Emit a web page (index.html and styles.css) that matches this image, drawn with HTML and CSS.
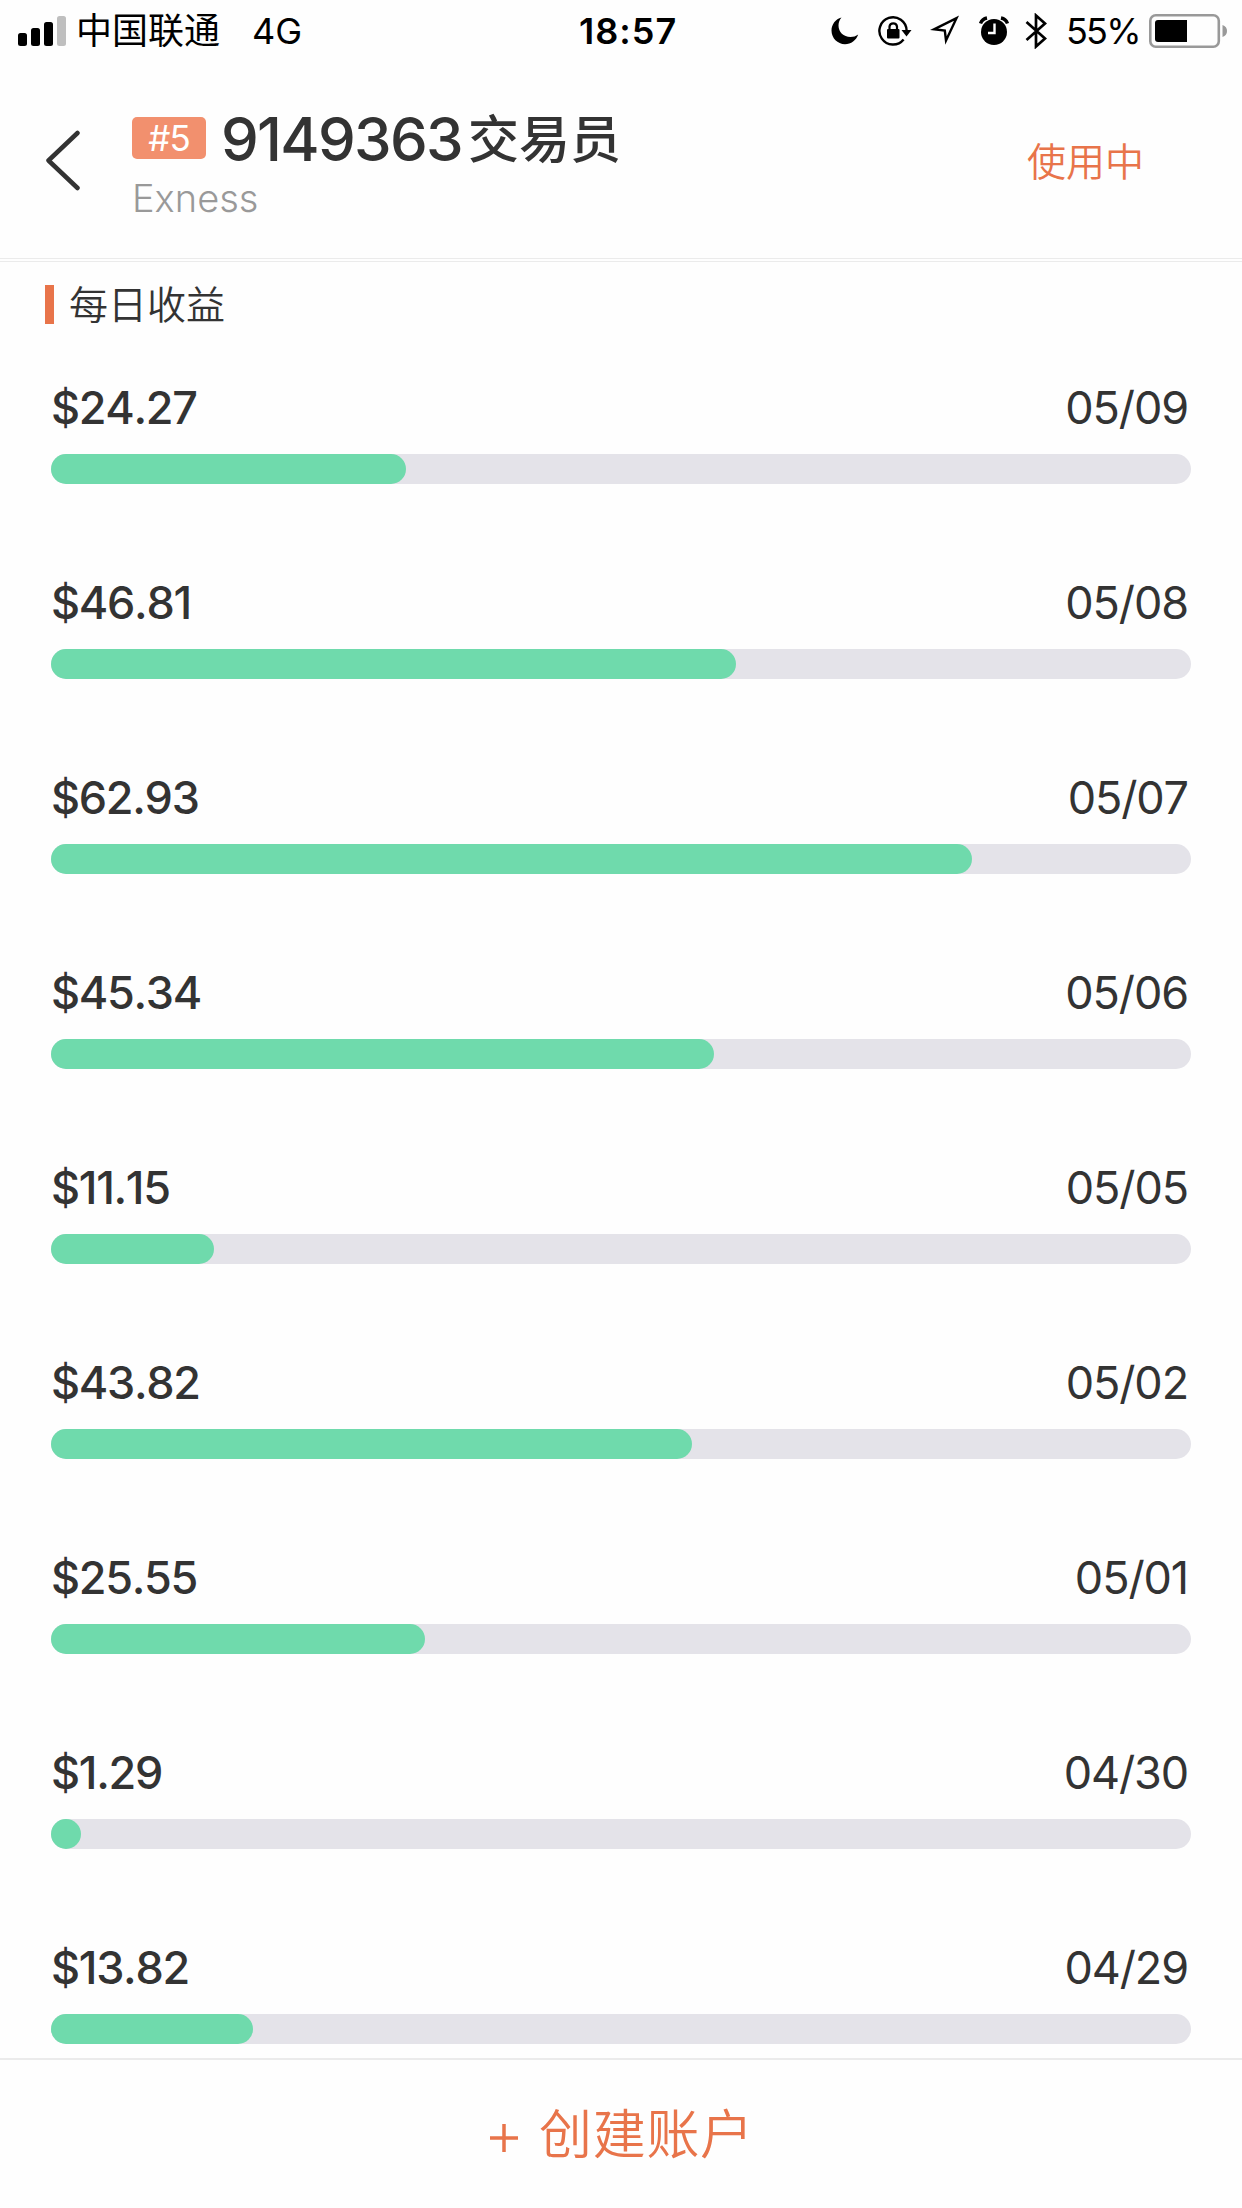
FILE: index.html
```
<!DOCTYPE html>
<html lang="zh-CN">

<head>
    <meta charset="UTF-8">
    <meta name="viewport" content="width=device-width, initial-scale=1.0">
    <title>9149363交易员</title>
    <link rel="stylesheet" href="styles.css">
</head>

<body>
    <div class="status-bar">
        <div class="status-left">
            <svg class="signal" width="48" height="30" viewBox="0 0 48 30">
                <rect x="0" y="17" width="9" height="13" rx="2.5" />
                <rect x="13" y="12" width="9" height="18" rx="2.5" />
                <rect x="26" y="6" width="9" height="24" rx="2.5" />
                <rect x="39" y="0" width="9" height="30" rx="2.5" fill="#bfbfbf" />
            </svg>
            <span class="carrier">中国联通</span>
            <span class="network">4G</span>
        </div>
        <span class="clock">18:57</span>
        <div class="status-right">
            <svg class="moon" width="28" height="28" viewBox="0 0 28 28">
                <path d="M10.5 0.5C4.500 2 0.500 7.500 0.500 13.500C0.500 21 6.500 27.200 14 27.200C20 27.200 25.300 23.200 27.200 17.500C25 19.200 22.300 20 19.500 20C12.500 20 7.500 15 7.500 8.500C7.500 5.500 8.500 2.700 10.500 0.500Z" />
            </svg>
            <svg class="lock" width="34" height="32" viewBox="0 0 34 32">
                <path d="M25.600 24.400A13.600 13.600 0 1 1 28.600 15.500" fill="none" stroke="#000" stroke-width="2.4" />
                <path d="M23.500 15H33.500L28.500 21.500Z" />
                <rect x="9" y="14" width="12.500" height="9.500" rx="1" />
                <path d="M11.500 15V11.500A3.800 3.800 0 0 1 19 11.500V15" fill="none" stroke="#000" stroke-width="2.200" />
            </svg>
            <svg class="location" width="30" height="32" viewBox="0 0 30 32">
                <path d="M4 14.300L26.500 3.200L16 25.500L14.800 15.600Z" fill="none" stroke="#000" stroke-width="2.400" />
            </svg>
            <svg class="alarm" width="30" height="30" viewBox="0 0 30 30">
                <circle cx="15" cy="16" r="13" />
                <path d="M1.500 7.500Q3 3 8 2M28.500 7.500Q27 3 22 2" fill="none" stroke="#000" stroke-width="3.400" />
                <path d="M15.500 7.500V17H9" fill="none" stroke="#fefefe" stroke-width="2.400" />
            </svg>
            <svg class="bluetooth" width="22" height="36" viewBox="0 0 22 36">
                <path d="M1.500 9L20 25.500L11 33.500V2.500L20 10.500L1.500 27" fill="none" stroke="#000" stroke-width="2.700" />
            </svg>
            <span class="percent">55%</span>
            <svg class="battery" width="79" height="34" viewBox="0 0 79 34">
                <rect x="1.300" y="1.300" width="68.500" height="31.400" rx="5.500" fill="none" stroke="#999" stroke-width="2.600" />
                <path d="M38 6H9Q6 6 6 9V25Q6 28 9 28H38Z" />
                <path d="M73.500 11Q78 12.500 78 17T73.500 23Z" fill="#999" />
            </svg>
        </div>
    </div>

    <header class="header">
        <svg class="back" width="36" height="61" viewBox="0 0 36 61">
            <path d="M32.500 3L3.500 30.500L32.500 58" />
        </svg>
        <div class="account">
            <div class="account-title">
                <span class="badge">#5</span>
                <h1><span class="account-number">9149363</span><span class="account-role">交易员</span></h1>
            </div>
            <p class="broker">Exness</p>
        </div>
        <span class="state">使用中</span>
    </header>

    <main class="content">
        <h2 class="section-title">每日收益</h2>

        <ul class="profit-list">
            <li class="profit-item">
                <div class="profit-info"><span class="amount">$24.27</span><span class="date">05/09</span></div>
                <div class="bar"><div class="bar-fill" style="width: 31.14%"></div></div>
            </li>
            <li class="profit-item">
                <div class="profit-info"><span class="amount">$46.81</span><span class="date">05/08</span></div>
                <div class="bar"><div class="bar-fill" style="width: 60.07%"></div></div>
            </li>
            <li class="profit-item">
                <div class="profit-info"><span class="amount">$62.93</span><span class="date">05/07</span></div>
                <div class="bar"><div class="bar-fill" style="width: 80.76%"></div></div>
            </li>
            <li class="profit-item">
                <div class="profit-info"><span class="amount">$45.34</span><span class="date">05/06</span></div>
                <div class="bar"><div class="bar-fill" style="width: 58.18%"></div></div>
            </li>
            <li class="profit-item">
                <div class="profit-info"><span class="amount">$11.15</span><span class="date">05/05</span></div>
                <div class="bar"><div class="bar-fill" style="width: 14.31%"></div></div>
            </li>
            <li class="profit-item">
                <div class="profit-info"><span class="amount">$43.82</span><span class="date">05/02</span></div>
                <div class="bar"><div class="bar-fill" style="width: 56.23%"></div></div>
            </li>
            <li class="profit-item">
                <div class="profit-info"><span class="amount">$25.55</span><span class="date">05/01</span></div>
                <div class="bar"><div class="bar-fill" style="width: 32.79%"></div></div>
            </li>
            <li class="profit-item">
                <div class="profit-info"><span class="amount">$1.29</span><span class="date">04/30</span></div>
                <div class="bar"><div class="bar-fill" style="width: 1.66%"></div></div>
            </li>
            <li class="profit-item">
                <div class="profit-info"><span class="amount">$13.82</span><span class="date">04/29</span></div>
                <div class="bar"><div class="bar-fill" style="width: 17.73%"></div></div>
            </li>
        </ul>
    </main>

    <footer class="footer">
        <svg class="plus" width="28" height="28" viewBox="0 0 28 28">
            <path d="M14 0V28M0 14H28" />
        </svg>
        <span>创建账户</span>
    </footer>
</body>

</html>
```

FILE: styles.css
```
* {
    margin: 0;
    padding: 0;
    box-sizing: border-box;
}

:root {
    --primary: #e8744a;
    --primary-light: #f2906e;
    --profit: #6fdaac;
    --track: #e4e3e9;
    --text: #333;
    --text-light: #999;
    --line: #ebebeb;
    --bg: #fefefe;
}

body {
    height: 2208px;
    display: flex;
    flex-direction: column;
    overflow: hidden;
    background: var(--bg);
    color: var(--text);
    font-family: Inter, "Noto Sans CJK SC", sans-serif;
    white-space: nowrap;
}

svg {
    display: block;
    flex-shrink: 0;
}

/* Status bar */
.status-bar {
    height: 62px;
    flex-shrink: 0;
    display: grid;
    grid-template-columns: 579px 252px 1fr;
    color: #000;
    font-size: 36px;
    line-height: 62px;
}

.status-left,
.status-right {
    display: flex;
    align-items: center;
}

.status-left {
    padding-left: 18px;
}

.carrier {
    margin-left: 10px;
    line-height: 60px;
}

.network {
    margin-left: 32px;
}

.clock {
    font-weight: 600;
    letter-spacing: 1px;
}

.lock {
    margin-left: 19px;
}

.location {
    margin-left: 18px;
}

.alarm {
    margin-left: 19px;
}

.bluetooth {
    margin-left: 16px;
}

.percent {
    width: 73px;
    margin-left: 19px;
    letter-spacing: -1.8px;
}

.battery {
    margin-left: 10px;
}

/* Header */
.header {
    height: 200px;
    flex-shrink: 0;
    display: flex;
    align-items: flex-start;
    padding: 46px 98px 0 45px;
    border-bottom: 1px solid var(--line);
    box-shadow: inset 0 -2px var(--bg), inset 0 -3px var(--line);
}

.back {
    margin-top: 22px;
}

.back path {
    fill: none;
    stroke: var(--text);
    stroke-width: 4.5;
    stroke-linecap: round;
    stroke-linejoin: round;
}

.account {
    margin-left: 51px;
}

.account-title {
    height: 62px;
    display: flex;
    align-items: center;
}

.badge {
    width: 74px;
    height: 42px;
    margin: 0 15px 2px 0;
    border-radius: 5px;
    background: var(--primary-light);
    color: #fff;
    font-size: 35px;
    line-height: 43px;
    text-align: center;
    letter-spacing: -1px;
}

.account-title h1 {
    font-size: 60px;
    font-weight: 500;
    line-height: 64px;
}

.account-number {
    margin-right: 6px;
    letter-spacing: -1.7px;
}

.account-role {
    font-size: 51px;
    line-height: 1;
    vertical-align: 3px;
}

.broker {
    margin-top: 3px;
    color: var(--text-light);
    font-size: 38px;
    font-weight: 300;
    line-height: 50px;
}

.state {
    margin-left: auto;
    color: var(--primary);
    font-size: 39px;
    font-weight: 350;
    line-height: 107px;
}

/* Daily profit */
.content {
    flex: 1;
    min-height: 0;
    overflow: hidden;
    padding: 23px 51px 0;
}

.section-title {
    height: 39px;
    margin-left: -6px;
    padding-left: 15px;
    border-left: 9px solid var(--primary);
    font-size: 39px;
    font-weight: 350;
    line-height: 39px;
}

.profit-list {
    padding-top: 59px;
    list-style: none;
}

.profit-item {
    height: 195px;
}

.profit-info {
    display: flex;
    justify-content: space-between;
    font-size: 45px;
    line-height: 50px;
    letter-spacing: -1.3px;
    font-kerning: none;
}

.amount {
    font-weight: 450;
}

.date {
    padding-right: 3px;
    letter-spacing: -1.1px;
}

.bar {
    height: 30px;
    margin-top: 21px;
    border-radius: 15px;
    background: var(--track);
}

.bar-fill {
    height: 100%;
    min-width: 30px;
    border-radius: 15px;
    background: var(--profit);
}

/* Create account */
.footer {
    height: 150px;
    flex-shrink: 0;
    display: flex;
    align-items: flex-start;
    padding-left: 490px;
    border-top: 2px solid var(--line);
    color: var(--primary);
    font-size: 53px;
    font-weight: 350;
    line-height: 150px;
    letter-spacing: 0.7px;
}

.plus {
    margin: 64px 21px 0 0;
}

.plus path {
    stroke: var(--primary);
    stroke-width: 3.5;
}
```
